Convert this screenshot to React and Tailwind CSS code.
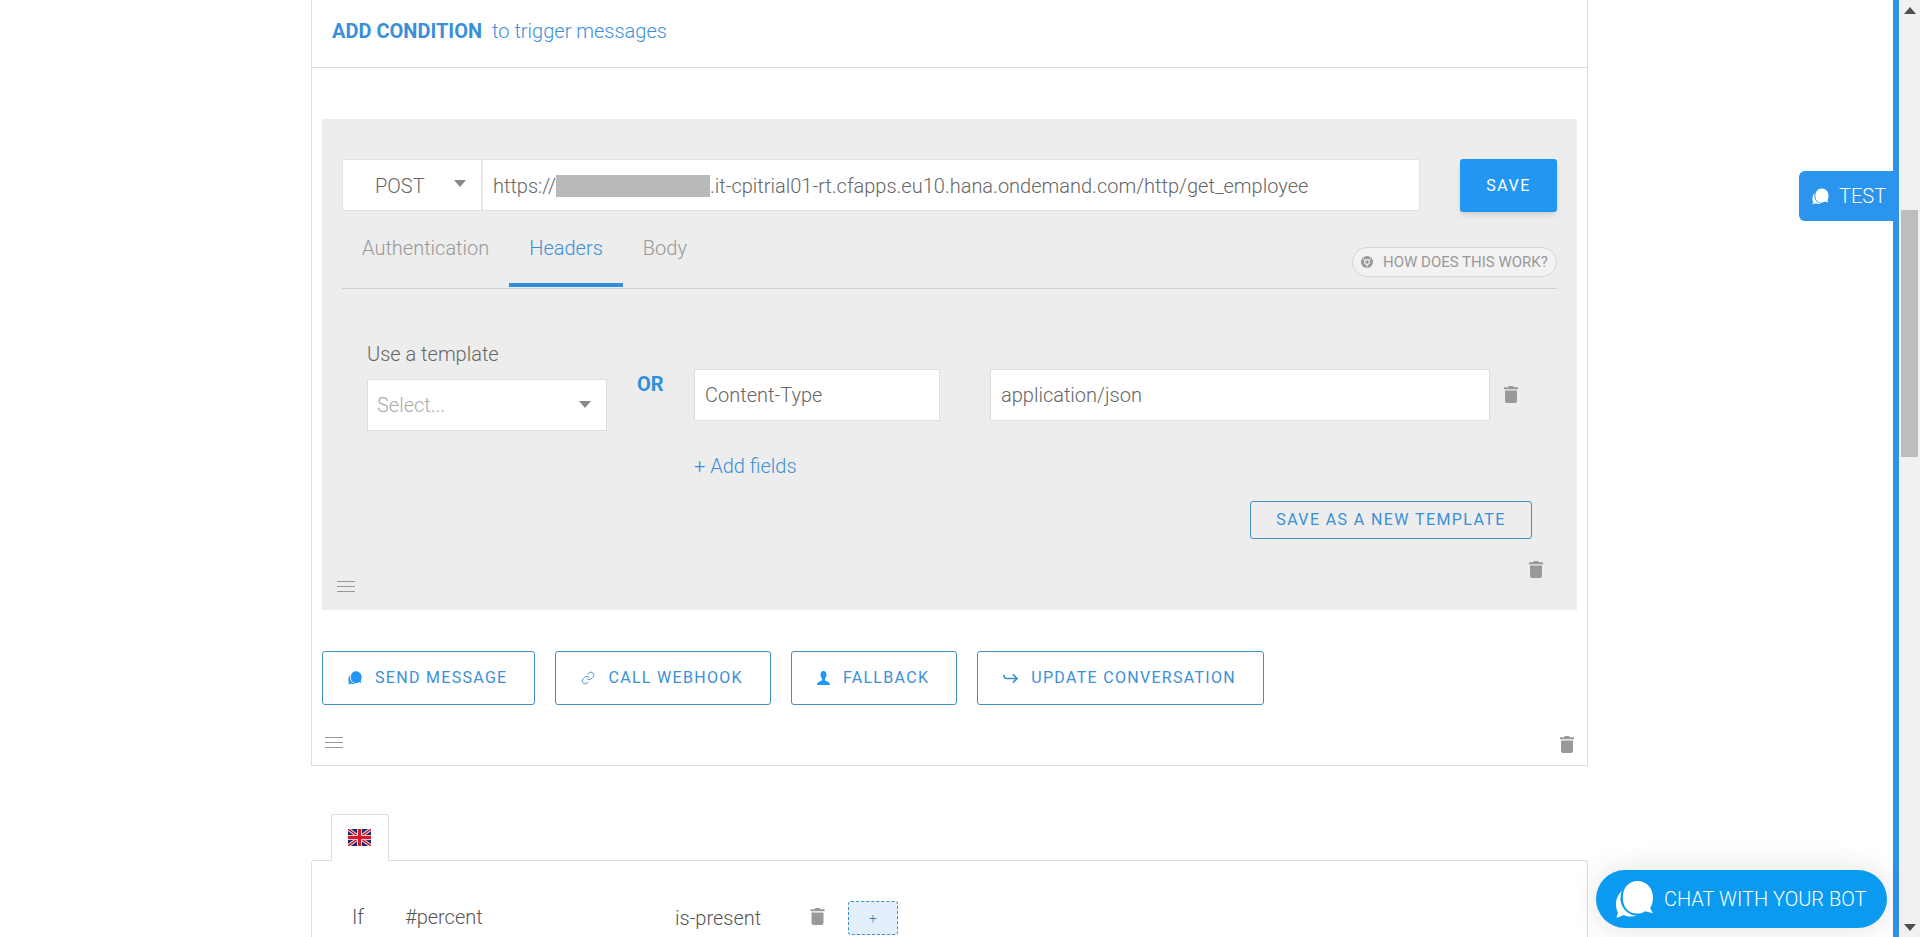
import React from 'react';
import { Link } from 'lucide-react';

const TrashIcon = ({ className = '' }) => (
  <svg viewBox="0 0 14 17" className={`w-[14px] h-[17px] text-[#999] ${className}`} fill="currentColor">
    <path d="M5 0h4l1 1.2h4v2H0v-2h4zM1 4.4h12V15a2 2 0 0 1-2 2H3a2 2 0 0 1-2-2z" />
  </svg>
);

const ChatIcon = ({ className = '' }) => (
  <svg viewBox="0 0 40 38" className={className} fill="currentColor">
    <path d="M23 0C32 0 39 7 39 17C39 22 37.5 26 36 28L39 33L31 31C28 33 25 33.5 22 33.5C13 33.5 8 26 8 17C8 7 14 0 23 0Z" />
    <path d="M7 10C2 15 1 20 1 24C1 28 2 31 3 32L1.5 38L9 35C13 37 18 37 23 35.5C15 35.5 8 30 6 22C5 17 6 13 7 10Z" />
  </svg>
);

const HamburgerIcon = () => (
  <svg viewBox="0 0 18 11" className="w-[18px] h-[11px] text-[#999]" stroke="currentColor" strokeWidth="1">
    <path d="M0 .5h18M0 5.5h18M0 10.5h18" />
  </svg>
);

const Caret = ({ className = '' }) => (
  <svg viewBox="0 0 12 7" className={`w-[12px] h-[7px] text-[#888] ${className}`} fill="currentColor">
    <path d="M0 0h12L6 7z" />
  </svg>
);

const HelpIcon = () => (
  <svg viewBox="0 0 12 12" className="w-[12px] h-[12px]">
    <circle cx="6" cy="6" r="6" fill="#999" />
    <circle cx="6" cy="6" r="2.4" fill="none" stroke="#f2f2f2" strokeWidth="1.2" />
    <path d="M2 2.4l2.4 2.2M10 2.4L7.6 4.6M6 8.4v3" stroke="#f2f2f2" strokeWidth="1" />
  </svg>
);

const UserIcon = () => (
  <svg viewBox="0 0 13 14" className="w-[13px] h-[14px] text-[#2196f3]" fill="currentColor">
    <path d="M6.5 0C8.4 0 9.5 1.5 9.5 3.6C9.5 5.6 8.6 7 8 7.8V9.4C9.5 10 11.6 10.6 12.4 12L13 14H0L.6 12C1.4 10.6 3.5 10 5 9.4V7.8C4.4 7 3.5 5.6 3.5 3.6C3.5 1.5 4.6 0 6.5 0Z" />
  </svg>
);

const HookArrowIcon = () => (
  <svg viewBox="0 0 16 12" className="w-[15px] h-[12px] text-[#3b8fd0]" fill="none" stroke="currentColor" strokeWidth="1.7">
    <path d="M1 2.5C1 5 2 6.5 4 6.5H14.5M10.5 2L15 6.5L10.5 11" />
  </svg>
);

const FlagIcon = () => (
  <svg viewBox="0 0 60 40" className="w-[23px] h-[17px] -ml-[2px] mb-[1px]" preserveAspectRatio="none">
    <rect width="60" height="40" fill="#1b2a6b" />
    <path d="M0 0L60 40M60 0L0 40" stroke="#fff" strokeWidth="8" />
    <path d="M0 0L60 40M60 0L0 40" stroke="#cf1b2b" strokeWidth="4" />
    <path d="M30 0V40M0 20H60" stroke="#fff" strokeWidth="12" />
    <path d="M30 0V40M0 20H60" stroke="#cf1b2b" strokeWidth="8" />
  </svg>
);

const ActionButton = ({ icon, label }) => (
  <button className="h-[54px] pl-[25px] pr-[27px] flex items-center gap-[13px] rounded-[3px] border border-[#3f8fbf] bg-white text-[16px] font-normal tracking-[1.3px] text-[#3b8fd8]">
    {icon}
    <span>{label}</span>
  </button>
);

export default function App() {
  return (
    <div className="relative flex h-screen overflow-hidden bg-white font-['Roboto',sans-serif] font-light text-[20px] leading-[24px] text-[#666]">
      {/* Page */}
      <div className="flex-1 pl-[311px]">
        <div className="w-[1277px] h-[766px] border-x border-b border-[#ddd]">
          <div className="h-[68px] border-b border-[#ddd] pl-[20px] pb-[5px] flex items-center text-[#3b8fd8]">
            <span className="font-bold">ADD CONDITION</span>
            <span className="ml-[10px]">to trigger messages</span>
          </div>

          {/* Webhook panel */}
          <div className="mt-[51px] mx-[10px] h-[491px] bg-[#ededed] pt-[40px] px-[20px]">
            <div className="flex justify-between h-[53px]">
              <div className="flex h-[52px] bg-white border border-[#e2e2e2]">
                <div className="w-[140px] border-r-2 border-[#e6e6e6] flex items-center pl-[32px] pr-[15px] pt-[1px] justify-between">
                  <span>POST</span>
                  <Caret className="mb-[4px]" />
                </div>
                <div className="w-[936px] pl-[10px] pt-[1px] flex items-center whitespace-nowrap">
                  <span>https://</span>
                  <span className="w-[154px] h-[22px] bg-[#b9b9b9]" />
                  <span>.it-cpitrial01-rt.cfapps.eu10.hana.ondemand.com/http/get_employee</span>
                </div>
              </div>
              <button className="w-[97px] h-[53px] bg-[#2196f3] rounded-[3px] shadow-md text-white text-[16px] font-normal tracking-[1.5px]">
                SAVE
              </button>
            </div>

            {/* Tabs */}
            <div className="flex justify-between h-[77px] border-b border-[#cfcfcf]">
              <div className="flex text-[#999]">
                <div className="px-[20px] pt-[24px]">Authentication</div>
                <div className="px-[20px] pt-[24px] h-[75px] border-b-4 border-[#2f8fdd] text-[#3b8fd8]">Headers</div>
                <div className="px-[20px] pt-[24px]">Body</div>
              </div>
              <div className="mt-[35px] h-[30px] w-[205px] rounded-full border border-[#d5d5d5] bg-[#f2f2f2] flex items-center pl-[8px] gap-[10px] text-[15px] font-normal text-[#999] whitespace-nowrap">
                <HelpIcon />
                <span>HOW DOES THIS WORK?</span>
              </div>
            </div>

            {/* Headers form */}
            <div className="flex pl-[25px]">
              <div className="w-[240px] pt-[52px]">
                <div className="h-[26px] leading-[26px]">Use a template</div>
                <div className="mt-[12px] h-[52px] bg-white border border-[#ddd] flex items-center justify-between pl-[9px] pr-[15px] text-[#aaa]">
                  <span>Select...</span>
                  <Caret className="mb-[2px]" />
                </div>
              </div>
              <div className="w-[87px] pl-[30px] pt-[83px] text-[20px] text-[#2f8fdd] font-bold">OR</div>
              <div className="pt-[80px]">
                <div className="flex items-center">
                  <div className="w-[246px] h-[52px] bg-white border border-[#ddd] flex items-center pl-[10px]">Content-Type</div>
                  <div className="ml-[50px] w-[500px] h-[52px] bg-white border border-[#ddd] flex items-center pl-[10px]">application/json</div>
                  <TrashIcon className="ml-[14px] mb-[1px]" />
                </div>
                <div className="mt-[33px] text-[#3b8fd8]">+ Add fields</div>
              </div>
            </div>

            <div className="flex justify-end pr-[25px] mt-[23px]">
              <button className="w-[282px] h-[38px] rounded-[3px] border border-[#3f8fbf] text-[16px] font-normal tracking-[1.4px] text-[#3b8fd8]">
                SAVE AS A NEW TEMPLATE
              </button>
            </div>

            <div className="flex justify-between items-start mt-[22px] pr-[14px] -ml-[5px]">
              <div className="mt-[20px]">
                <HamburgerIcon />
              </div>
              <TrashIcon />
            </div>
          </div>

          {/* Action buttons */}
          <div className="mt-[41px] mx-[10px] flex gap-[20px]">
            <ActionButton icon={<ChatIcon className="w-[14px] h-[14px] text-[#2196f3]" />} label="SEND MESSAGE" />
            <ActionButton icon={<Link className="w-[14px] h-[14px] text-[#3b8fd0]" strokeWidth={1.5} />} label="CALL WEBHOOK" />
            <ActionButton icon={<UserIcon />} label="FALLBACK" />
            <ActionButton icon={<HookArrowIcon />} label="UPDATE CONVERSATION" />
          </div>
          <div className="mt-[31px] ml-[13px] mr-[13px] flex justify-between items-start">
            <div className="mt-[1px]">
              <HamburgerIcon />
            </div>
            <TrashIcon />
          </div>
        </div>

        {/* Language tab */}
        <div className="relative z-10 mt-[48px] ml-[20px] -mb-px w-[58px] h-[47px] rounded-t-[3px] border-x border-t border-[#ddd] bg-white flex items-center justify-center">
          <FlagIcon />
        </div>
        <div className="w-[1277px] h-[200px] rounded-t-[3px] border-x border-t border-[#ddd]">
          <div className="mt-[40px] ml-[40px] h-[34px] flex items-center text-[#555]">
            <span className="w-[53px] mb-[3px]">If</span>
            <span className="w-[270px] mb-[3px]">#percent</span>
            <span className="w-[135px]">is-present</span>
            <TrashIcon className="w-[15px] mb-[3px]" />
            <button className="ml-[23px] w-[50px] h-[34px] rounded-[3px] border border-dashed border-[#3f8fbf] bg-[#e3f0fb] text-[14px] text-[#3b7fb0]">
              +
            </button>
          </div>
        </div>
      </div>

      {/* Right edge */}
      <div className="w-[6px] bg-[#2f93e6]" />
      <div className="w-[21px] bg-[#f1f1f1] flex flex-col items-center">
        <Caret className="mt-[7px] w-[9px] h-[5px] rotate-180 text-[#505050]" />
        <div className="mt-[196px] w-[17px] h-[247px] bg-[#bdbdbd]" />
        <Caret className="mt-auto mb-[6px] w-[9px] h-[5px] text-[#505050]" />
      </div>

      {/* Floating buttons */}
      <div className="absolute right-[21px] top-[171px] w-[100px] h-[50px] rounded-l-[6px] bg-[#2b94ec] text-white flex items-center pl-[13px] gap-[10px]">
        <ChatIcon className="w-[17px] h-[17px]" />
        <span>TEST</span>
      </div>
      <div className="absolute right-[33px] bottom-[9px] w-[291px] h-[58px] rounded-full bg-[#0a9af0] text-white shadow-[0_0_30px_rgba(0,0,0,0.12)] flex items-center pl-[19px] gap-[10px] whitespace-nowrap">
        <ChatIcon className="w-[39px] h-[37px]" />
        <span>CHAT WITH YOUR BOT</span>
      </div>
    </div>
  );
}
